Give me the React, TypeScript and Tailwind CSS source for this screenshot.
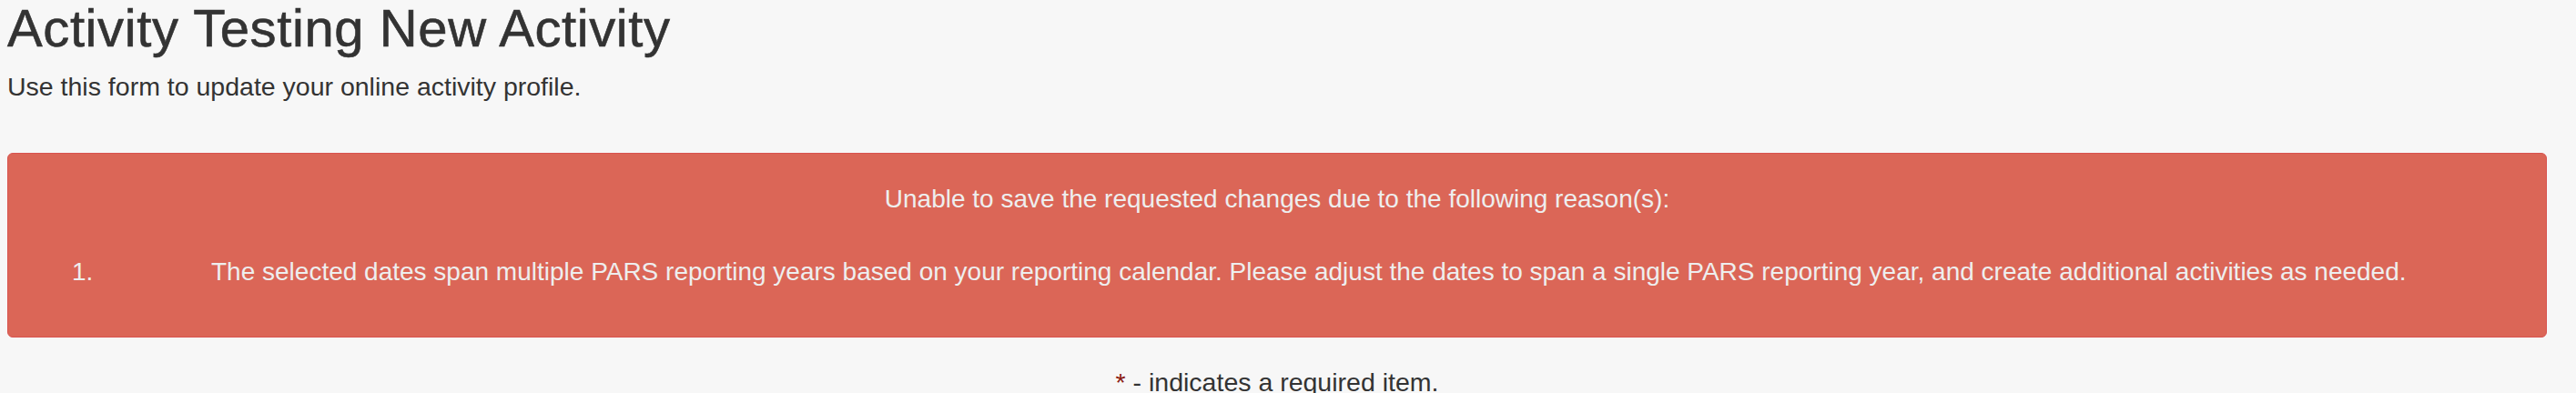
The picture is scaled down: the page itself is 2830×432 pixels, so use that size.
export default function App() {
  return (
    <div
      className="min-h-[432px] bg-[#f7f7f7] pl-[8px] pr-[32px] text-[#333333]"
      style={{ fontFamily: '"Liberation Sans", Arial, sans-serif' }}
    >
      <h1 className="m-0 text-[58px] leading-[62px] font-normal tracking-[0.6px] [-webkit-text-stroke:0.6px_#333333]">
        Activity Testing New Activity
      </h1>
      <p className="mt-[15px] text-[28.5px] leading-[36px]">
        Use this form to update your online activity profile.
      </p>
      <div className="mt-[55px] h-[203px] rounded-[6px] border border-[#d9534f] bg-[#db6657] text-[#eeeeee]">
        <div className="pt-[35px] text-center text-[28px] leading-[30px]">
          Unable to save the requested changes due to the following reason(s):
        </div>
        <div className="mt-[50px] flex items-start text-[28px] leading-[30px]">
          <span className="ml-[70px] w-[153px] shrink-0">1.</span>
          <span>
            The selected dates span multiple PARS reporting years based on your reporting calendar. Please adjust the dates to span a single PARS reporting year, and create additional activities as needed.
          </span>
        </div>
      </div>
      <div className="mt-[31px] text-center text-[28.5px] leading-[36px]">
        <span className="text-[#8b1c12]">*</span> - indicates a required item.
      </div>
    </div>
  );
}
